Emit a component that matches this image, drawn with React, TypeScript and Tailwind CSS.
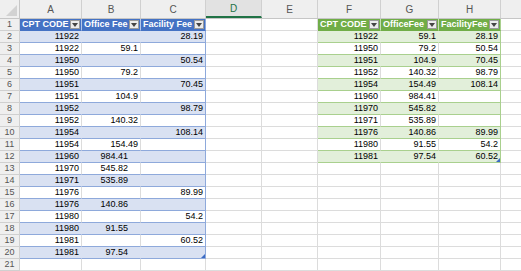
import React from 'react';

const COLS = ['A', 'B', 'C', 'D', 'E', 'F', 'G', 'H', 'I'];
const WIDTHS = ['w-[62px]', 'w-[59px]', 'w-[65px]', 'w-[56px]', 'w-[56px]', 'w-[63px]', 'w-[58px]', 'w-[62px]', 'w-[62px]'];

// left table: A..C, rows 1..20
const left: string[][] = [
  ['11922', '', '28.19'],
  ['11922', '59.1', ''],
  ['11950', '', '50.54'],
  ['11950', '79.2', ''],
  ['11951', '', '70.45'],
  ['11951', '104.9', ''],
  ['11952', '', '98.79'],
  ['11952', '140.32', ''],
  ['11954', '', '108.14'],
  ['11954', '154.49', ''],
  ['11960', '984.41', ''],
  ['11970', '545.82', ''],
  ['11971', '535.89', ''],
  ['11976', '', '89.99'],
  ['11976', '140.86', ''],
  ['11980', '', '54.2'],
  ['11980', '91.55', ''],
  ['11981', '', '60.52'],
  ['11981', '97.54', ''],
];

// right table: F..H, rows 1..12
const right: string[][] = [
  ['11922', '59.1', '28.19'],
  ['11950', '79.2', '50.54'],
  ['11951', '104.9', '70.45'],
  ['11952', '140.32', '98.79'],
  ['11954', '154.49', '108.14'],
  ['11960', '984.41', ''],
  ['11970', '545.82', ''],
  ['11971', '535.89', ''],
  ['11976', '140.86', '89.99'],
  ['11980', '91.55', '54.2'],
  ['11981', '97.54', '60.52'],
];

type Theme = { head: string; band: string; line: string };
const blue: Theme = { head: 'bg-[#4472c4]', band: 'bg-[#d9e1f2]', line: 'border-[#8ea9db]' };
const green: Theme = { head: 'bg-[#70ad47]', band: 'bg-[#e2efda]', line: 'border-[#a9d08e]' };

function FilterBtn() {
  return (
    <span className="ml-auto mr-[1px] flex h-[9px] w-[10px] shrink-0 items-center justify-center border border-[#9a9a9a] bg-[#ececec]">
      <svg width="6" height="4" viewBox="0 0 6 4">
        <path d="M0 0h6L3 4z" fill="#444" />
      </svg>
    </span>
  );
}

function TableCell({ theme, row, col, lastCol, header, value, last, indent }: {
  theme: Theme; row: number; col: number; lastCol: boolean; header?: string; value?: string; last?: boolean; indent?: boolean;
}) {
  const w = WIDTHS[col];
  if (header) {
    return (
      <div className={`${w} ${theme.head} flex h-full shrink-0 items-center border-b border-r border-b-white/0 ${lastCol ? theme.line : 'border-r-white/60'} pl-[2px] text-[9px] font-bold text-white`}>
        <span className="whitespace-nowrap">{header}</span>
        <FilterBtn />
      </div>
    );
  }
  const banded = row % 2 === 0;
  const rightLine = lastCol ? theme.line : banded ? 'border-r-transparent' : 'border-r-[#dcdcdc]';
  return (
    <div className={`${w} ${banded ? theme.band : 'bg-white'} relative flex h-full shrink-0 items-center justify-end border-b border-r ${theme.line} ${rightLine} ${indent ? 'pr-[12px]' : 'pr-[2px]'} text-[9px] text-black`}>
      {value}
      {last && lastCol && (
        <svg className="absolute bottom-0 right-0" width="4" height="4" viewBox="0 0 4 4">
          <path d="M4 0v4H0z" fill="#3b6bc4" />
        </svg>
      )}
    </div>
  );
}

function PlainCell({ col }: { col: number }) {
  return <div className={`${WIDTHS[col]} h-full shrink-0 border-b border-r border-[#dcdcdc] bg-white`} />;
}

export default function App() {
  const rows = Array.from({ length: 21 }, (_, i) => i + 1);
  return (
    <div className="h-[271px] w-[521px] overflow-hidden bg-white font-['Liberation_Sans',Arial,sans-serif]">
      {/* column letters */}
      <div className="flex h-[19px] border-b border-[#c6c6c6] bg-[#efefef]">
        <div className="relative w-[20px] shrink-0 border-r border-[#c6c6c6]">
          <svg className="absolute bottom-[2px] right-[2px]" width="11" height="11" viewBox="0 0 11 11">
            <path d="M11 0v11H0z" fill="#d2d2d2" />
          </svg>
        </div>
        {COLS.map((c, i) => (
          <div
            key={c}
            className={`${WIDTHS[i]} flex shrink-0 items-center justify-center border-r border-[#d0d0d0] text-[10px] ${c === 'D' ? 'border-b-2 border-b-[#217346] bg-[#e2e2e2] text-[#217346]' : 'text-[#555]'}`}
          >
            {c === 'I' ? '' : c}
          </div>
        ))}
      </div>
      {rows.map((r) => (
        <div key={r} className="flex h-[12px] leading-none">
          <div className="flex w-[20px] shrink-0 items-center justify-center border-b border-r border-[#d0d0d0] bg-[#efefef] text-[9px] text-[#555]">
            {r}
          </div>
          {COLS.map((c, i) => {
            if (i <= 2 && r <= 20) {
              const heads = ['CPT CODE', 'Office Fee', 'Facility Fee'];
              return (
                <TableCell key={c} theme={blue} row={r} col={i} lastCol={i === 2}
                  header={r === 1 ? heads[i] : undefined}
                  value={r > 1 ? left[r - 2][i] : undefined} last={r === 20}
                  indent={i === 1 && r >= 12} />
              );
            }
            if (i >= 5 && i <= 7 && r <= 12) {
              const heads = ['CPT CODE', 'OfficeFee', 'FacilityFee'];
              return (
                <TableCell key={c} theme={green} row={r} col={i} lastCol={i === 7}
                  header={r === 1 ? heads[i - 5] : undefined}
                  value={r > 1 ? right[r - 2][i - 5] : undefined} last={r === 12} />
              );
            }
            return <PlainCell key={c} col={i} />;
          })}
        </div>
      ))}
    </div>
  );
}
